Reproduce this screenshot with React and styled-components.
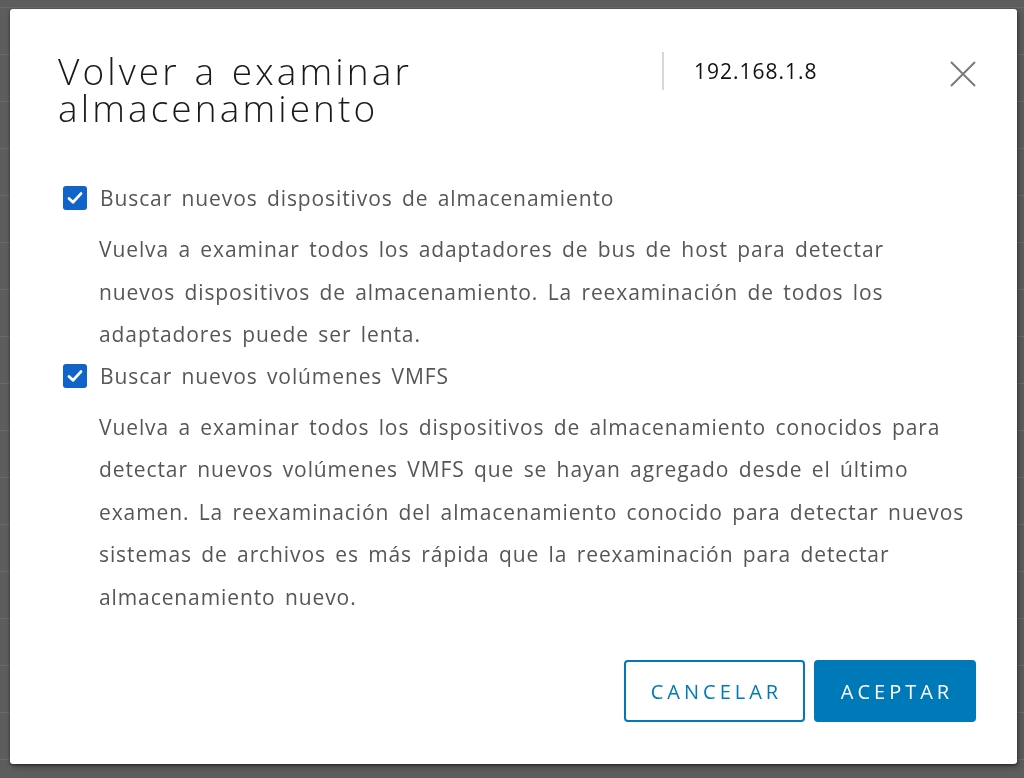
import React from "react";
import styled, { createGlobalStyle } from "styled-components";

const GlobalStyle = createGlobalStyle`
  html, body {
    margin: 0;
    padding: 0;
    background: #5d5d5d;
    font-family: "Open Sans", "Noto Sans", sans-serif;
    overflow: hidden;
  }
`;

const Page = styled.div`
  width: 1024px;
  height: 778px;
  display: flex;
  flex-direction: column;
  padding-top: 7px;
  box-sizing: border-box;
`;

const PageRow = styled.div`
  height: 46px;
  flex: none;
  border-top: 1px solid #6a6a6a;
`;

const Overlay = styled.div`
  position: fixed;
  inset: 0;
  display: flex;
  align-items: flex-start;
  justify-content: flex-start;
  padding: 9px 0 0 10px;
`;

const Modal = styled.div`
  width: 1007px;
  height: 755px;
  background: #fff;
  border-radius: 3px;
  box-shadow: 0 1px 3px rgba(0, 0, 0, 0.5), 2px 3px 6px rgba(0, 0, 0, 0.25);
  box-sizing: border-box;
  padding: 41px 41px 42px 48px;
  display: flex;
  flex-direction: column;
`;

const Header = styled.div`
  display: flex;
  align-items: flex-start;
`;

const Title = styled.h1`
  margin: 2px 0 0;
  flex: 1;
  font-family: "Open Sans", sans-serif;
  font-weight: 300;
  font-size: 37px;
  line-height: 37px;
  color: #1a1a1a;
  letter-spacing: 3.1px;
  word-spacing: 2px;
`;

const HostBox = styled.div`
  display: flex;
  align-items: center;
  margin-top: 2px;
  height: 38px;
  border-left: 2px solid #d7d7d7;
  padding-left: 30px;
  width: 288px;
  box-sizing: border-box;
`;

const Host = styled.span`
  font-size: 21px;
  font-weight: 500;
  color: #111;
  letter-spacing: 1px;
`;

const Close = styled.button`
  border: 0;
  background: transparent;
  padding: 0;
  width: 26px;
  height: 26px;
  margin-top: 11px;
  cursor: pointer;
  display: flex;
  align-items: center;
  justify-content: center;
`;

const Body = styled.div`
  margin-top: 57px;
  padding-left: 5px;
  flex: 1;
  display: flex;
  flex-direction: column;
`;

const Option = styled.label`
  display: flex;
  align-items: center;
  gap: 13px;
  height: 30px;
  font-size: 21px;
  letter-spacing: 0.9px;
  word-spacing: 3px;
  color: #565656;
  cursor: pointer;
`;

const Box = styled.span`
  width: 24px;
  height: 24px;
  border-radius: 3px;
  background: #0f63c9;
  display: flex;
  align-items: center;
  justify-content: center;
  flex: none;
`;

const Description = styled.p`
  margin: 15px 0 5px 36px;
  width: 867px;
  font-size: 21px;
  line-height: 42.5px;
  letter-spacing: 0.9px;
  word-spacing: 3px;
  color: #565656;
`;

const Footer = styled.div`
  display: flex;
  justify-content: flex-end;
  gap: 9px;
`;

const Button = styled.button`
  height: 62px;
  padding: 0 0 0 4px;
  border-radius: 4px;
  border: 2px solid #0079b8;
  background: ${(p) => (p.$primary ? "#0079b8" : "#fff")};
  color: ${(p) => (p.$primary ? "#fff" : "#0079b8")};
  font-family: "Open Sans", sans-serif;
  font-size: 20px;
  font-weight: 500;
  letter-spacing: 4px;
  cursor: pointer;
  width: ${(p) => p.$w}px;
`;

const Check = () => (
  <svg width="18" height="18" viewBox="0 0 18 18">
    <path d="M3 9.4 L7 13.2 L15 4.6" fill="none" stroke="#fff" strokeWidth="2.8" strokeLinecap="round" strokeLinejoin="round" />
  </svg>
);

export default function App() {
  return (
    <>
      <GlobalStyle />
      <Page>
        {Array.from({ length: 17 }).map((_, i) => (
          <PageRow key={i} />
        ))}
      </Page>
      <Overlay>
        <Modal>
          <Header>
            <Title>
              Volver a examinar
              <br />
              almacenamiento
            </Title>
            <HostBox>
              <Host>192.168.1.8</Host>
            </HostBox>
            <Close aria-label="Cerrar">
              <svg width="26" height="26" viewBox="0 0 26 26">
                <path d="M1 1 L25 25 M25 1 L1 25" stroke="#7a7a7a" strokeWidth="2" />
              </svg>
            </Close>
          </Header>
          <Body>
            <Option>
              <Box>
                <Check />
              </Box>
              Buscar nuevos dispositivos de almacenamiento
            </Option>
            <Description>
              Vuelva a examinar todos los adaptadores de bus de host para detectar nuevos dispositivos de
              almacenamiento. La reexaminación de todos los adaptadores puede ser lenta.
            </Description>
            <Option>
              <Box>
                <Check />
              </Box>
              Buscar nuevos volúmenes VMFS
            </Option>
            <Description>
              Vuelva a examinar todos los dispositivos de almacenamiento conocidos para detectar nuevos
              volúmenes VMFS que se hayan agregado desde el último examen. La reexaminación del
              almacenamiento conocido para detectar nuevos sistemas de archivos es más rápida que la
              reexaminación para detectar almacenamiento nuevo.
            </Description>
          </Body>
          <Footer>
            <Button $w={181}>CANCELAR</Button>
            <Button $primary $w={162}>ACEPTAR</Button>
          </Footer>
        </Modal>
      </Overlay>
    </>
  );
}
